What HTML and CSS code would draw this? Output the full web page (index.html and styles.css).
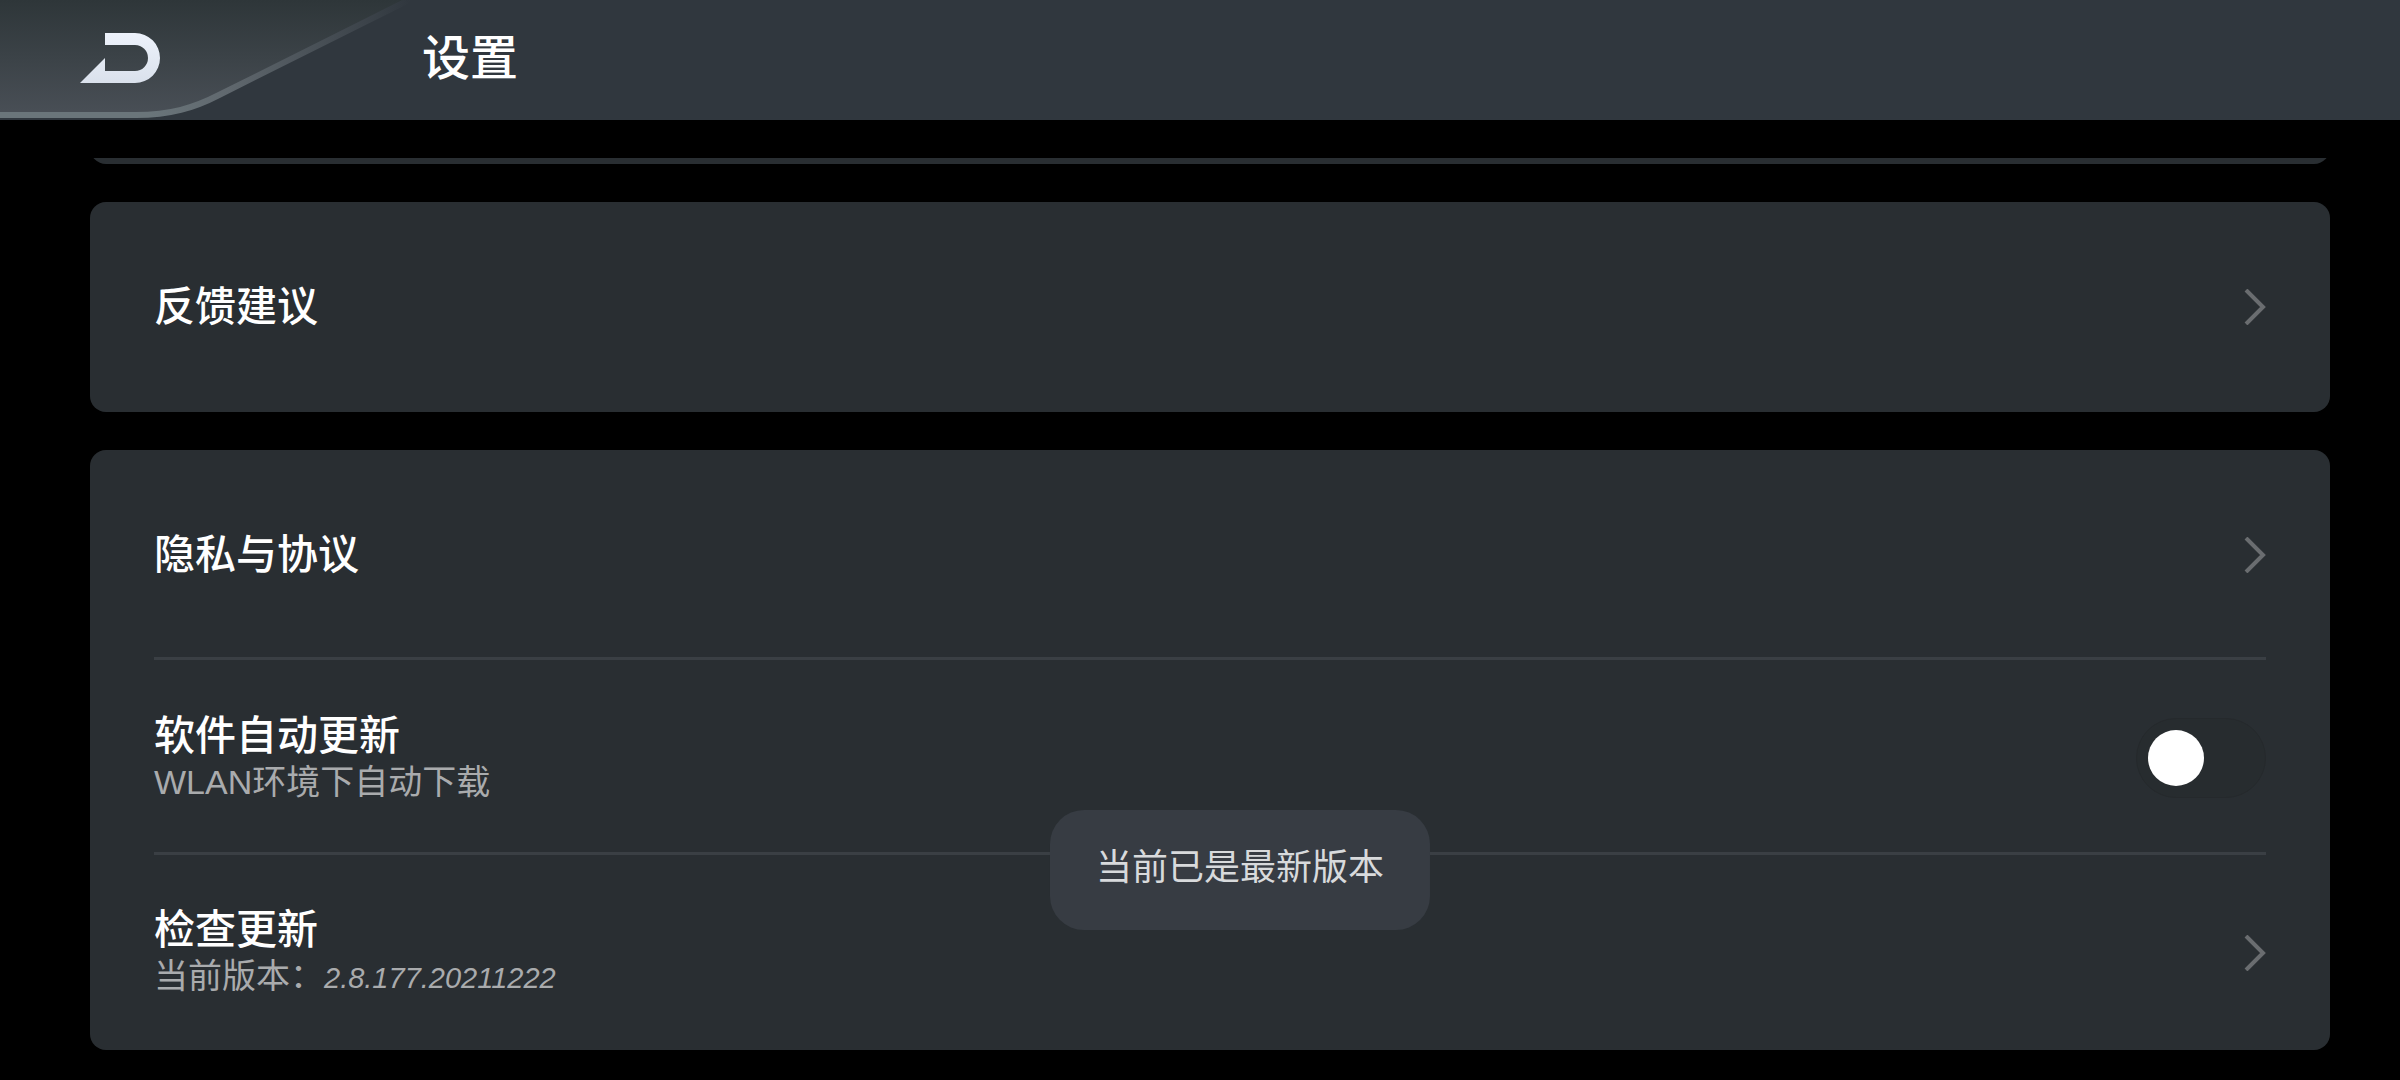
FILE: index.html
```html
<!DOCTYPE html>
<html lang="zh-CN">
<head>
  <meta charset="UTF-8" />
  <meta name="viewport" content="width=device-width, initial-scale=1" />
  <title>设置</title>
  <link rel="stylesheet" href="styles.css">
</head>
<body>

  <header class="topbar">
    <button class="back" type="button" aria-label="返回">
      <svg width="420" height="120" viewBox="0 0 420 120" aria-hidden="true">
        <defs>
          <linearGradient id="tabFill" x1="0" y1="0" x2="0" y2="1">
            <stop offset="0" stop-color="#2e3639" />
            <stop offset="1" stop-color="#494f56" />
          </linearGradient>
          <linearGradient id="tabEdge" gradientUnits="userSpaceOnUse" x1="150" y1="0" x2="410" y2="0">
            <stop offset="0" stop-color="#6a757a" />
            <stop offset="0.3" stop-color="#60686e" />
            <stop offset="1" stop-color="#30373e" />
          </linearGradient>
          <linearGradient id="arrowFill" x1="0" y1="0" x2="0" y2="1">
            <stop offset="0" stop-color="#edf2fb" />
            <stop offset="1" stop-color="#dae1ec" />
          </linearGradient>
        </defs>
        <path d="M0 0H409L219 95C194 108 170 115 136 115H0Z" fill="url(#tabFill)" />
        <path d="M0 115H136C170 115 194 108 219 95L417 -4" fill="none" stroke="url(#tabEdge)" stroke-width="6" />
        <path d="M105 33H135A25 25 0 0 1 135 83H80L105 58V71H135A13 13 0 0 0 135 45H105Z" fill="url(#arrowFill)" />
      </svg>
    </button>
    <h1>设置</h1>
  </header>

  <main class="list">
    <section class="card card-scrolled"></section>

    <section class="card">
      <a class="row row-tall" href="#feedback">
        <span class="name">反馈建议</span>
        <svg class="chevron" viewBox="0 0 22 36" aria-hidden="true"><path d="M2 1L19 18L2 35" /></svg>
      </a>
    </section>

    <section class="card">
      <a class="row row-tall" href="#privacy">
        <span class="name">隐私与协议</span>
        <svg class="chevron" viewBox="0 0 22 36" aria-hidden="true"><path d="M2 1L19 18L2 35" /></svg>
      </a>
      <label class="row" for="autoUpdate">
        <span class="text">
          <span class="name">软件自动更新</span>
          <span class="note">WLAN环境下自动下载</span>
        </span>
        <input class="switch" type="checkbox" id="autoUpdate">
      </label>
      <a class="row" href="#update">
        <span class="text">
          <span class="name">检查更新</span>
          <span class="note">当前版本：<span class="version">2.8.177.20211222</span></span>
        </span>
        <svg class="chevron" viewBox="0 0 22 36" aria-hidden="true"><path d="M2 1L19 18L2 35" /></svg>
      </a>
    </section>
  </main>

  <div class="toast" role="status">当前已是最新版本</div>

</body>
</html>
```
FILE: styles.css
```css
* { box-sizing: border-box; }
body {
  margin: 0;
  height: 100vh;
  display: flex;
  flex-direction: column;
  background: #000;
  color: #fff;
  font-family: "Liberation Sans", "Noto Sans CJK SC", sans-serif;
}

/* top bar */
.topbar { display: flex; align-items: center; height: 120px; flex-shrink: 0; background: #30373e; }
.back { width: 422px; height: 120px; padding: 0; border: 0; background: none; text-align: left; overflow: hidden; cursor: pointer; }
.back svg { display: block; }
h1 { margin: 0; padding-bottom: 2px; font-size: 48px; line-height: 56px; font-weight: 500; }

/* settings list */
.list {
  flex: 1;
  min-height: 0;
  margin-top: 38px;
  padding: 0 70px 30px 90px;
  overflow: hidden;
}
.card { margin-bottom: 38px; padding: 0 64px; border-radius: 16px; background: #292e32; }
.card-scrolled { height: 210px; margin-top: -204px; }
.row {
  display: flex;
  align-items: center;
  justify-content: space-between;
  min-height: 195px;
  color: inherit;
  text-decoration: none;
  cursor: pointer;
}
.row-tall { min-height: 210px; }
.row:not(:last-child) { box-shadow: inset 0 -3px #3a3f44; }
.text { display: flex; flex-direction: column; }
.name { font-size: 41px; line-height: 48px; font-weight: 500; }
.note { font-size: 34px; line-height: 44px; color: #a9abad; }
.version { font-size: 29px; font-style: italic; }

.chevron { width: 22px; height: 36px; fill: none; stroke: #6a6d70; stroke-width: 4; }

.switch {
  appearance: none;
  display: flex;
  align-items: center;
  width: 130px;
  height: 80px;
  margin: 0;
  padding: 0 11px;
  border: 1px solid #25292c;
  border-radius: 40px;
  background: #272c2f;
  cursor: pointer;
}
.switch::before { content: ""; width: 56px; height: 56px; border-radius: 50%; background: #fff; }
.switch:checked { justify-content: flex-end; background: #3c7be0; }

.toast {
  position: fixed;
  left: calc(50% + 40px);
  bottom: 150px;
  transform: translateX(-50%);
  padding: 32px 46px 36px;
  border-radius: 34px;
  background: #373c43;
  color: #d8dadc;
  font-size: 36px;
  line-height: 52px;
  white-space: nowrap;
}
```
